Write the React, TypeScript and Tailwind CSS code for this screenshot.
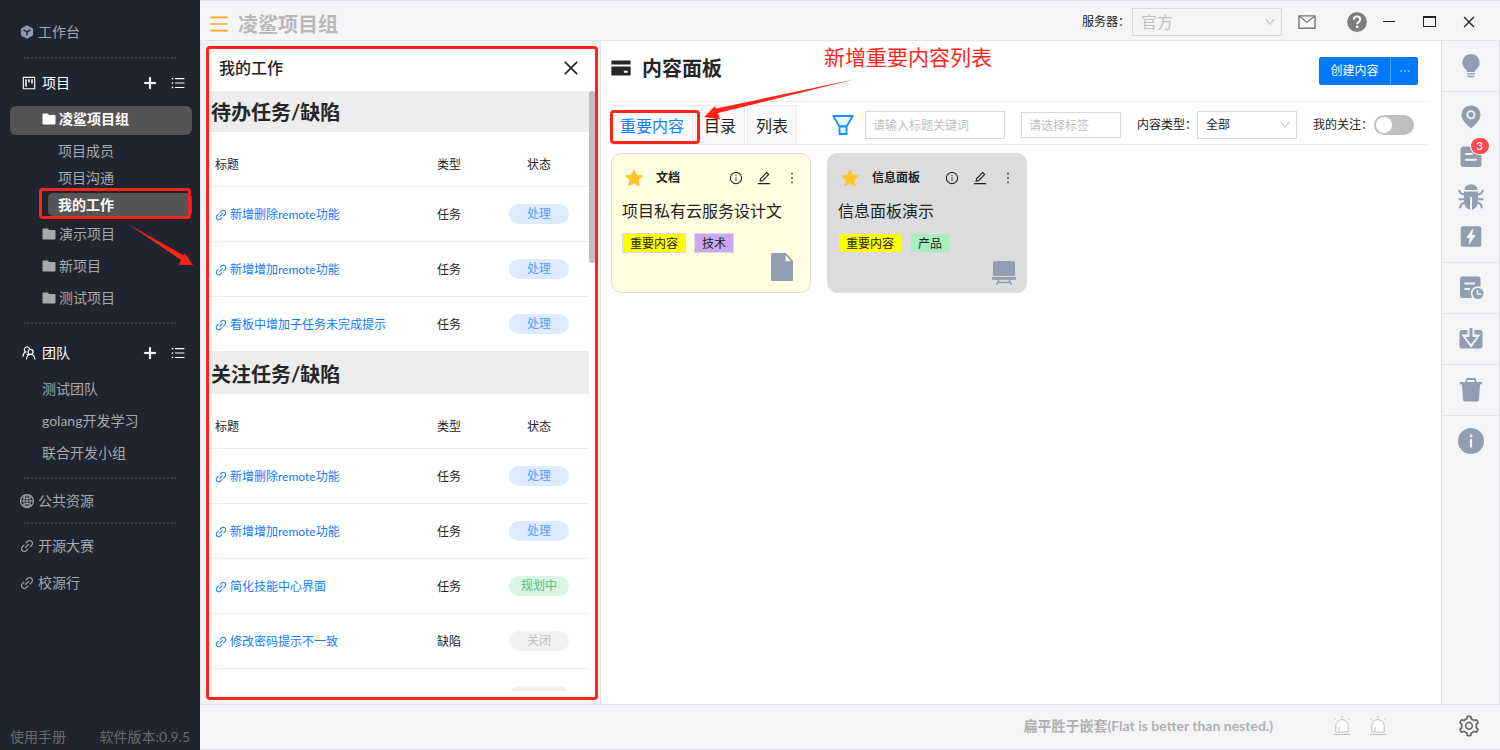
import type { ReactNode } from 'react';
import {
  AiFillCreditCard,
  AiOutlineClose,
  AiOutlineDown,
  AiOutlineEdit,
  AiOutlineEllipsis,
  AiOutlineGlobal,
  AiOutlineInfoCircle,
  AiOutlineLink,
  AiOutlineMail,
  AiOutlineMenu,
  AiOutlineMore,
  AiOutlinePlus,
  AiOutlineProject,
  AiOutlineSetting,
  AiOutlineUnorderedList,
} from 'react-icons/ai';

type Task = {
  title: string;
  kind: string;
  status: string;
};

type Tag = {
  name: string;
  color: string;
};

const statusStyles: Record<string, string> = {
  处理: 'bg-[#dcebff] text-[#549cff]',
  规划中: 'bg-[#d9f4e2] text-[#4fc37c]',
  关闭: 'bg-[#f2f2f2] text-[#bfbfbf]',
};

const todoTasks: Task[] = [
  { title: '新增删除remote功能', kind: '任务', status: '处理' },
  { title: '新增增加remote功能', kind: '任务', status: '处理' },
  { title: '看板中增加子任务未完成提示', kind: '任务', status: '处理' },
];

const watchTasks: Task[] = [
  { title: '新增删除remote功能', kind: '任务', status: '处理' },
  { title: '新增增加remote功能', kind: '任务', status: '处理' },
  { title: '简化技能中心界面', kind: '任务', status: '规划中' },
  { title: '修改密码提示不一致', kind: '缺陷', status: '关闭' },
  { title: '', kind: '', status: '' },
];

/* ---------- icons ---------- */

function CubeIcon() {
  return (
    <svg viewBox="0 0 14 14" className="size-3.5 shrink-0">
      <path d="M7 .8 12.600 3.800v6.400L7 13.200 1.400 10.200V3.800z" fill="#8f9bb3" stroke="#8f9bb3" strokeLinejoin="round" />
      <path d="M3.600 4.800 7 6.800l3.400-2M7 6.800v3.800" fill="none" stroke="#1f2430" strokeWidth="1.500" />
    </svg>
  );
}

function FolderIcon() {
  return (
    <svg viewBox="0 0 14 14" className="size-3.5 shrink-0" fill="currentColor">
      <path d="M1.300 1.500h4.200L7.300 3h5.400c.5 0 .8.300.8.800v7.900c0 .5-.3.800-.8.800H1.300c-.5 0-.8-.3-.8-.8V2.300c0-.5.3-.8.8-.8z" />
    </svg>
  );
}

function TeamIcon() {
  return (
    <svg viewBox="0 0 14 14" className="size-3.5 shrink-0" fill="none" stroke="currentColor" strokeWidth="1.200" strokeLinecap="round">
      <path d="M7.500 2.600A2.700 2.700 0 1 0 3.700 6C2 6.700 1 8.300 1 10.300" />
      <circle cx="8.600" cy="5.900" r="2.500" />
      <path d="M4.500 13c.2-2.800 1.700-4.500 4.100-4.500s4 1.700 4.200 4.500M5 8.300l1.200.5" />
    </svg>
  );
}

function FunnelIcon() {
  return (
    <svg viewBox="0 0 22 22" className="size-[22px]" fill="#e6f7ff" stroke="#1890ff" strokeWidth="1.800" strokeLinejoin="round">
      <path d="M1.200 2h19.600L14.500 12.500h-7z" />
      <path d="M7.500 12.500h7v7.500h-7z" />
    </svg>
  );
}

function BulbIcon() {
  return (
    <svg viewBox="0 0 24 26" className="h-[26px] w-6" fill="#929db2">
      <path d="M12 1a8.600 8.600 0 0 0-4.800 15.700c.6.5.8 1.200.8 2.300h8c0-1.100.2-1.800.8-2.300A8.600 8.600 0 0 0 12 1z" />
      <path d="M8 20h8v1.500H8zM8 22.500h8c-.2 1.300-1 2-2 2h-4c-1 0-1.800-.7-2-2z" opacity=".85" />
    </svg>
  );
}

function PinIcon() {
  return (
    <svg viewBox="0 0 24 26" className="h-[26px] w-6" fill="#929db2">
      <path fillRule="evenodd" d="M12 1.500c-5.400 0-9.500 4.100-9.500 9.300 0 5 4.300 9.300 9.500 13.700 5.200-4.400 9.500-8.700 9.500-13.700 0-5.200-4.100-9.300-9.500-9.300zm0 4.700a4.500 4.500 0 1 1 0 9 4.500 4.500 0 0 1 0-9z" />
      <circle cx="12" cy="10.700" r="2.700" />
    </svg>
  );
}

function DocIcon() {
  return (
    <svg viewBox="0 0 24 24" className="size-6">
      <rect x="1.500" y="1.500" width="21" height="20.500" rx="3" fill="#929db2" />
      <path d="M7 9h6M7 14.800h10" stroke="#f5f5f8" strokeWidth="2" strokeLinecap="round" />
    </svg>
  );
}

function BugIcon() {
  return (
    <svg viewBox="0 0 28 28" className="size-7" fill="#929db2">
      <path d="M7.500 6.900a6.500 5.700 0 0 1 13 0z" />
      <path d="M7 8.500h14v9c0 4.800-2.600 8.500-6 9.300V14h-2v12.800c-3.400-.8-6-4.500-6-9.300z" />
      <path
        d="M7 11.500 3.500 10.300 2 7M21 11.500l3.500-1.200L26 7M7.500 16.200H1.500M20.500 16.200h6M7.800 19.500l-3.600 1.700-1.200 4M20.200 19.500l3.600 1.700 1.200 4"
        fill="none"
        stroke="#929db2"
        strokeWidth="2"
      />
    </svg>
  );
}

function BoltIcon() {
  return (
    <svg viewBox="0 0 24 24" className="size-6">
      <rect x="1.700" y="1.200" width="20.600" height="20.600" rx="2.500" fill="#929db2" />
      <path d="M13.500 4.500 8 12.500h3.300l-1 6 5.700-8h-3.400z" fill="#f5f5f8" stroke="#f5f5f8" strokeLinejoin="round" />
    </svg>
  );
}

function DocClockIcon() {
  return (
    <svg viewBox="0 0 26 26" className="size-[26px]">
      <rect x="2" y="1.500" width="20.500" height="21.500" rx="2.500" fill="#929db2" />
      <path d="M6.500 8.500H17M6.500 14H12" stroke="#f5f5f8" strokeWidth="2" />
      <circle cx="20" cy="18.500" r="7.300" fill="#f5f5f8" />
      <circle cx="20" cy="18.500" r="5.500" fill="#929db2" />
      <path d="M19.500 15v4h4" fill="none" stroke="#f5f5f8" strokeWidth="1.500" />
    </svg>
  );
}

function DownloadIcon() {
  return (
    <svg viewBox="0 0 24 24" className="size-6">
      <path d="M3 3h18a2.500 2.500 0 0 1 2.500 2.500V19a2.500 2.500 0 0 1-2.500 2.500H3A2.500 2.500 0 0 1 .5 19V5.500A2.500 2.500 0 0 1 3 3z" fill="#929db2" />
      <path d="M8.500 1h7v6.500h6L12 20.700 2.500 7.500h6z" fill="#f5f5f8" />
      <path d="M10.500 1h3v9h4.300L12 17.300 6.200 10h4.300z" fill="#929db2" />
    </svg>
  );
}

function TrashIcon() {
  return (
    <svg viewBox="0 0 24 26" className="h-[26px] w-6" fill="#929db2">
      <path d="M7.500 6V3.300c0-.8.500-1.300 1.300-1.300h6.400c.8 0 1.300.5 1.300 1.300V6" fill="none" stroke="#929db2" strokeWidth="1.800" />
      <path d="M.8 5h22.400v2.300H.8zM3 7.300h18l-1 15.200c-.1 1.300-.8 2-2 2H6c-1.200 0-1.900-.7-2-2z" />
    </svg>
  );
}

function InfoIcon() {
  return (
    <svg viewBox="0 0 26 26" className="size-[26px]">
      <circle cx="13" cy="13" r="13" fill="#929db2" />
      <circle cx="13" cy="7.800" r="1.500" fill="#f5f5f8" />
      <path d="M13 11v8.500" stroke="#f5f5f8" strokeWidth="2.200" />
    </svg>
  );
}

function AlarmIcon() {
  return (
    <svg viewBox="0 0 18 20" className="h-5 w-[18px]" fill="none" stroke="#bdbdbd">
      <path d="M2.800 16V9.800a6.200 6.200 0 0 1 12.400 0V16z" fill="#fff" />
      <path d="M6 15v-4M1 18.500h16M9 0v2M1.300 2.300l1.500 1.500M16.700 2.300l-1.500 1.500" />
    </svg>
  );
}

function HelpIcon() {
  return (
    <svg viewBox="0 0 22 22" className="size-[22px]">
      <circle cx="11" cy="11" r="10.400" fill="#7d7d7d" stroke="#fff" />
      <path d="M7.800 8.800c0-2 1.300-3.200 3.200-3.200s3.300 1.100 3.300 2.900c0 2.200-3.100 2.300-3.100 4.700" fill="none" stroke="#fff" strokeWidth="2" />
      <rect x="10.100" y="14.700" width="2.200" height="2.200" fill="#fff" />
    </svg>
  );
}

function StarIcon() {
  return (
    <svg viewBox="0 0 20 20" className="size-5">
      <path
        d="m10 1.800 2.500 5.400 5.900.7-4.400 4 1.200 5.800L10 14.800l-5.200 2.900L6 11.900l-4.400-4 5.900-.7z"
        fill="#ffc62c"
        stroke="#ffc62c"
        strokeWidth="1"
        strokeLinejoin="round"
      />
    </svg>
  );
}

function FileIcon() {
  return (
    <svg viewBox="0 0 22 28" className="h-7 w-[22px]">
      <path d="M1 0h14l7 8v19a1 1 0 0 1-1 1H1a1 1 0 0 1-1-1V1a1 1 0 0 1 1-1z" fill="#929db2" />
      <path d="M14.500 2v6.300H20z" fill="#fffee0" />
    </svg>
  );
}

function BoardIcon() {
  return (
    <svg viewBox="0 0 26 26" className="size-[26px]" fill="#929db2">
      <rect x="2" y="1" width="22" height="15" rx="1.500" />
      <path d="M1 17h24v2.800H1z" />
      <path d="m8 20-2.500 4.500M18 20l2.500 4.500M7 22.500h12" fill="none" stroke="#929db2" strokeWidth="1.600" />
    </svg>
  );
}

/* ---------- sidebar ---------- */

function Dots({ className }: { className: string }) {
  return <hr className={`mx-6 border-0 border-t-2 border-dotted border-[#3b3b3b] ${className}`} />;
}

function SideHeading({ icon, label }: { icon: ReactNode; label: string }) {
  return (
    <div className="flex h-8 items-center pr-3.5 pl-[21px] text-white">
      <span className="flex w-4 justify-center">{icon}</span>
      <span className="ml-[5px] flex-1">{label}</span>
      <button type="button" aria-label={`新建${label}`}>
        <AiOutlinePlus className="size-4 stroke-[60]" />
      </button>
      <button type="button" aria-label={`${label}列表`} className="ml-3">
        <AiOutlineUnorderedList className="size-4" />
      </button>
    </div>
  );
}

function Sidebar() {
  return (
    <nav className="flex w-[200px] shrink-0 flex-col bg-[#1f2430] text-sm text-[#a9a9a9]">
      <a href="#" className="mt-4 flex h-8 items-center gap-1 pl-5">
        <CubeIcon />
        工作台
      </a>
      <Dots className="mt-[9px]" />

      <div className="mt-2">
        <SideHeading icon={<AiOutlineProject className="size-4" />} label="项目" />
      </div>
      <a href="#" className="mr-2 ml-2.5 mt-[7px] flex h-[29px] items-center gap-[3px] rounded-md bg-[#555] pb-1 pl-8 font-bold text-white">
        <FolderIcon />
        凌鲨项目组
      </a>
      <div className="mt-0.5">
        <a href="#" className="flex h-[27px] items-center pl-[58px]">项目成员</a>
        <a href="#" className="flex h-[27px] items-center pl-[58px]">项目沟通</a>
        <a href="#" className="mr-2 ml-12 flex h-[27px] items-center rounded-md border-y-2 border-[#1f2430] bg-[#555] pl-2.5 font-bold text-white">
          我的工作
        </a>
      </div>
      {['演示项目', '新项目', '测试项目'].map((name) => (
        <a key={name} href="#" className="flex h-8 items-center gap-[3px] pl-[42px]">
          <FolderIcon />
          {name}
        </a>
      ))}
      <Dots className="mt-2" />

      <div className="mt-[13px]">
        <SideHeading icon={<TeamIcon />} label="团队" />
      </div>
      <div className="mt-1">
        {['测试团队', 'golang开发学习', '联合开发小组'].map((name) => (
          <a key={name} href="#" className="flex h-8 items-center pl-[42px]">
            {name}
          </a>
        ))}
      </div>
      <Dots className="mt-2" />

      <a href="#" className="mt-1.5 flex h-8 items-center gap-[3px] pl-[19px]">
        <AiOutlineGlobal className="size-4" />
        公共资源
      </a>
      <Dots className="mt-[5px]" />
      <a href="#" className="mt-1.5 flex h-8 items-center gap-[3px] pl-[19px]">
        <AiOutlineLink className="size-4" />
        开源大赛
      </a>
      <a href="#" className="mt-[5px] flex h-8 items-center gap-[3px] pl-[19px]">
        <AiOutlineLink className="size-4" />
        校源行
      </a>

      <div className="mt-auto flex justify-between px-2.5 pb-[3px] text-[#6b6b6b]">
        <a href="#">使用手册</a>
        <span>软件版本:0.9.5</span>
      </div>
    </nav>
  );
}

/* ---------- top bar ---------- */

function TopBar() {
  return (
    <header className="flex h-[41px] items-center border-y border-[#e4e4e8] bg-[#f5f5f8] pt-0.5 pr-[23px]">
      <button type="button" aria-label="菜单" className="ml-2 pt-1 text-[#ffa61a]">
        <AiOutlineMenu className="size-[22px]" />
      </button>
      <h1 className="ml-2 flex-1 pt-1 text-xl font-bold text-[#b8b8b8]">凌鲨项目组</h1>
      <label htmlFor="server" className="text-xs text-[#222]">
        服务器：
      </label>
      <div className="relative ml-0.5">
        <select
          id="server"
          disabled
          className="h-7 w-[150px] appearance-none border border-[#d9d9d9] bg-[#f5f5f5] pl-2 text-base leading-6 text-[#bfbfbf] opacity-100"
        >
          <option>官方</option>
        </select>
        <AiOutlineDown className="pointer-events-none absolute top-2 right-1.5 size-3 text-[#bfbfbf]" />
      </div>
      <button type="button" aria-label="邮件" className="ml-[15px] text-[#777]">
        <AiOutlineMail className="size-5" />
      </button>
      <button type="button" aria-label="帮助" className="ml-[29px]">
        <HelpIcon />
      </button>
      <button type="button" aria-label="最小化" className="ml-[15px] h-4 w-3">
        <span className="block h-px bg-[#222]" />
      </button>
      <button type="button" aria-label="最大化" className="ml-7 h-[11px] w-[13px] border border-t-2 border-[#222]" />
      <button type="button" aria-label="关闭窗口" className="ml-[25px] text-[#222]">
        <AiOutlineClose className="size-4" />
      </button>
    </header>
  );
}

/* ---------- my work drawer ---------- */

function TaskTable({ title, tasks }: { title: string; tasks: Task[] }) {
  return (
    <section>
      <h2 className="flex h-[43px] items-center bg-[#ededed] pt-0.5 pl-0.5 text-xl font-bold text-[#262626]">{title}</h2>
      <table className="w-full table-fixed border-separate border-spacing-0 text-xs text-[#262626]">
        <thead>
          <tr className="h-[55px]">
            <th className="border-b border-[#ededed] pt-3 pl-1.5 text-left font-normal">标题</th>
            <th className="w-20 border-b border-[#ededed] pt-3 font-normal">类型</th>
            <th className="w-[100px] border-b border-[#ededed] pt-3 font-normal">状态</th>
          </tr>
        </thead>
        <tbody>
          {tasks.map((task, index) => (
            <tr key={index} className="group h-[55px] last:h-[54px]">
              <td className="border-b border-[#ededed] pt-0.5 pl-1 group-last:border-b-0">
                {task.title && (
                  <a href="#" className="flex items-center gap-0.5 pl-px text-[#0f7dff]">
                    <AiOutlineLink className="size-3.5" />
                    {task.title}
                  </a>
                )}
              </td>
              <td className="border-b border-[#ededed] pt-0.5 text-center group-last:border-b-0">{task.kind}</td>
              <td className="border-b border-[#ededed] group-last:border-b-0">
                <div
                  className={`mx-auto h-5 w-[60px] rounded-full text-center leading-5 ${statusStyles[task.status] ?? 'bg-[#f2f2f2]'}`}
                >
                  {task.status}
                </div>
              </td>
            </tr>
          ))}
        </tbody>
      </table>
    </section>
  );
}

function WorkDrawer() {
  return (
    <aside className="w-[401px] shrink-0 border-x border-[#e4e4e8] bg-[#f0f1f5] pt-[5px] pr-0.5 pb-1 pl-[5px]">
      <div className="flex h-full flex-col rounded-sm border-3 border-[#ff2318] bg-white pb-1.5">
        <div className="flex h-[42px] shrink-0 items-center pr-[14px] pb-1 pl-2.5 text-[#222]">
          <h2 className="flex-1 text-base font-medium">我的工作</h2>
          <button type="button" aria-label="关闭">
            <AiOutlineClose className="size-5" />
          </button>
        </div>
        <div className="flex min-h-0 flex-1">
          <div className="min-w-0 flex-1 overflow-hidden">
            <div className="-mt-0.5">
              <TaskTable title="待办任务/缺陷" tasks={todoTasks} />
              <TaskTable title="关注任务/缺陷" tasks={watchTasks} />
            </div>
          </div>
          <div className="h-[172px] w-1.5 rounded-full bg-[#bfbfbf]" />
        </div>
      </div>
    </aside>
  );
}

/* ---------- content panel ---------- */

type ContentCardProps = {
  kind: string;
  title: string;
  background: string;
  tags: Tag[];
  icon: ReactNode;
};

function ContentCard({ kind, title, background, tags, icon }: ContentCardProps) {
  return (
    <article className={`relative h-[140px] w-[200px] rounded-[10px] border border-[#dcdcdc] px-2.5 pt-3 text-[#222] ${background}`}>
      <div className="flex h-[23px] items-center pl-0.5">
        <StarIcon />
        <h3 className="ml-3 flex-1 text-xs font-bold">{kind}</h3>
        <button type="button" aria-label="详情">
          <AiOutlineInfoCircle className="size-3.5" />
        </button>
        <button type="button" aria-label="编辑" className="ml-[13px]">
          <AiOutlineEdit className="size-4" />
        </button>
        <button type="button" aria-label="更多" className="ml-3">
          <AiOutlineMore className="size-4" />
        </button>
      </div>
      <a href="#" className="mt-2.5 block text-base leading-6">
        {title}
      </a>
      <div className="mt-2.5 flex gap-2 text-xs">
        {tags.map((tag) => (
          <span key={tag.name} className={`h-5 border border-[#dcdcdc] px-[7px] leading-5 ${tag.color}`}>
            {tag.name}
          </span>
        ))}
      </div>
      <div className="absolute right-[17px] bottom-[11px]">{icon}</div>
    </article>
  );
}

function ContentPanel() {
  return (
    <main className="min-w-0 flex-1 bg-white pr-[11px] pl-2.5">
      <div className="flex h-[61px] items-center border-b border-[#ededed] pr-3 text-[#262626]">
        <AiFillCreditCard className="mb-1.5 -ml-px size-[22px]" />
        <h2 className="ml-2.5 flex-1 pb-1.5 text-xl font-bold">内容面板</h2>
        <div className="flex h-7 overflow-hidden rounded-xs bg-[#0079ff] text-xs text-white">
          <button type="button" className="w-[72px] border-r border-[#4da1ff]">
            创建内容
          </button>
          <button type="button" aria-label="更多操作" className="flex w-[27px] items-center justify-center">
            <AiOutlineEllipsis className="size-3.5" />
          </button>
        </div>
      </div>

      <div className="flex h-[43px] items-end border-b border-[#ededed]">
        <div role="tablist" className="flex h-[39px] gap-0.5 text-base text-[#222]">
          <button type="button" role="tab" aria-selected="true" className="w-[82px] border border-b-0 border-[#ededed] pt-0.5 text-[#0f7dff]">
            重要内容
          </button>
          <button type="button" role="tab" className="w-[50px] border border-b-0 border-[#ededed] bg-[#fafafa] pt-0.5">
            目录
          </button>
          <button type="button" role="tab" className="w-[50px] border border-b-0 border-[#ededed] bg-[#fafafa] pt-0.5">
            列表
          </button>
        </div>
        <form className="ml-auto flex h-[38px] items-center pr-4 text-xs text-[#222]">
          <FunnelIcon />
          <input
            type="text"
            aria-label="标题关键词"
            placeholder="请输入标题关键词"
            className="ml-[11px] h-7 w-[140px] border border-[#d9d9d9] px-[7px] placeholder:text-[#bfbfbf]"
          />
          <input
            type="text"
            aria-label="标签"
            placeholder="请选择标签"
            className="ml-4 h-[26px] w-[100px] border border-[#d9d9d9] px-[7px] placeholder:text-[#bfbfbf]"
          />
          <label htmlFor="kind" className="ml-4">
            内容类型：
          </label>
          <div className="relative">
            <select id="kind" className="h-7 w-[100px] appearance-none border border-[#d9d9d9] bg-white pl-2">
              <option>全部</option>
            </select>
            <AiOutlineDown className="pointer-events-none absolute top-2 right-1.5 size-3 text-[#bfbfbf]" />
          </div>
          <label htmlFor="watch" className="ml-4">
            我的关注：
          </label>
          <input
            id="watch"
            type="checkbox"
            role="switch"
            className="ml-px h-5 w-10 appearance-none rounded-full bg-[#bfbfbf] before:m-0.5 before:block before:size-4 before:rounded-full before:bg-white before:content-['']"
          />
        </form>
      </div>

      <div className="flex flex-wrap gap-4 pt-2">
        <ContentCard
          kind="文档"
          title="项目私有云服务设计文"
          background="bg-[#fffee0]"
          tags={[
            { name: '重要内容', color: 'bg-[#ffff00]' },
            { name: '技术', color: 'bg-[#c9a8f0]' },
          ]}
          icon={<FileIcon />}
        />
        <ContentCard
          kind="信息面板"
          title="信息面板演示"
          background="bg-[#dcdcdc]"
          tags={[
            { name: '重要内容', color: 'bg-[#ffff00]' },
            { name: '产品', color: 'bg-[#a8efc0]' },
          ]}
          icon={<div className="-mr-2 -mb-[5px]"><BoardIcon /></div>}
        />
      </div>
    </main>
  );
}

/* ---------- right rail ---------- */

function RailButton({ label, className, children }: { label: string; className: string; children: ReactNode }) {
  return (
    <button type="button" aria-label={label} className={`flex w-full items-center justify-center ${className}`}>
      {children}
    </button>
  );
}

function RightRail() {
  return (
    <div className="w-[59px] shrink-0 border-x border-[#dedee6] bg-[#f5f5f8]">
      <RailButton label="需求" className="h-[51px] border-b border-[#e4e4e8]"><BulbIcon /></RailButton>
      <div className="h-[171px] border-b border-[#e4e4e8] pt-[5px]">
        <RailButton label="里程碑" className="h-10"><PinIcon /></RailButton>
        <RailButton label="任务" className="h-10">
          <span className="relative">
            <DocIcon />
            <span className="absolute -top-[7px] left-3 flex h-4 w-[18px] items-center justify-center rounded-full bg-[#ff4d4f] text-xs text-white ring-1 ring-white">
              3
            </span>
          </span>
        </RailButton>
        <RailButton label="缺陷" className="h-10"><BugIcon /></RailButton>
        <RailButton label="自动化" className="h-10"><BoltIcon /></RailButton>
      </div>
      <RailButton label="记录" className="h-[51px] border-b border-[#e4e4e8]"><DocClockIcon /></RailButton>
      <RailButton label="下载" className="h-[51px] border-b border-[#e4e4e8]"><DownloadIcon /></RailButton>
      <RailButton label="回收站" className="h-[51px] border-b border-[#e4e4e8]"><TrashIcon /></RailButton>
      <RailButton label="信息" className="h-[50px]"><InfoIcon /></RailButton>
    </div>
  );
}

function BottomBar() {
  return (
    <footer className="flex h-[46px] shrink-0 items-center border-y border-[#e4e4e8] bg-[#f5f5f8] pr-[19px] pb-0.5">
      <p className="ml-auto text-sm font-bold text-[#b0b0b0]">扁平胜于嵌套(Flat is better than nested.)</p>
      <button type="button" aria-label="提醒" className="ml-[60px]"><AlarmIcon /></button>
      <button type="button" aria-label="告警" className="ml-[18px]"><AlarmIcon /></button>
      <button type="button" aria-label="设置" className="ml-[70px] text-[#666]">
        <AiOutlineSetting className="size-6" />
      </button>
    </footer>
  );
}

/* red notes drawn over the page */
function Notes() {
  return (
    <div className="pointer-events-none">
      <div className="absolute top-[188px] left-[39px] h-[31px] w-[152px] rounded-sm border-3 border-[#ff2318]" />
      <div className="absolute top-[110px] left-[610px] h-[34px] w-[90px] rounded-sm border-3 border-[#ff2318]" />
      <svg viewBox="0 0 68 44" className="absolute top-[224px] left-[127px] h-11 w-[68px]" fill="#ff2318">
        <path d="M1 0 56 31l2-1.500L66 41H52l2-5z" />
      </svg>
      <svg viewBox="0 0 156 44" className="absolute top-[78px] left-[702px] h-11 w-[156px]" fill="#ff2318">
        <path d="M154 1 16 35l2 6.500L2 39 13 28l1 2.500z" />
      </svg>
      <p className="absolute top-[41px] left-[824px] text-[21px] leading-8 text-[#ff2318]">新增重要内容列表</p>
    </div>
  );
}

export default function App() {
  return (
    <div className="relative flex h-screen overflow-hidden font-[Lato,'Noto_Sans_CJK_SC',sans-serif]">
      <Sidebar />
      <div className="flex min-w-0 flex-1 flex-col">
        <TopBar />
        <div className="flex min-h-0 flex-1">
          <WorkDrawer />
          <ContentPanel />
          <RightRail />
        </div>
        <BottomBar />
      </div>
      <Notes />
    </div>
  );
}
